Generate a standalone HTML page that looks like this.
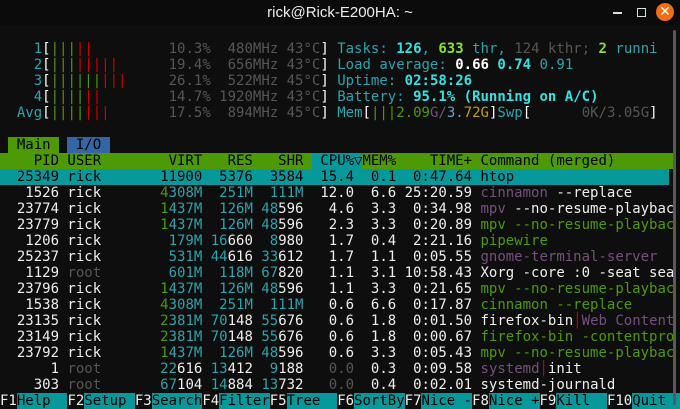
<!DOCTYPE html>
<html><head><meta charset="utf-8"><style>
body{margin:0;width:680px;height:409px;background:#0e0e0e;overflow:hidden;position:relative}
#tb{position:absolute;left:0;top:0;width:680px;height:25px;background:#0b0b0b;color:#eee;font:15px "Liberation Sans","DejaVu Sans",sans-serif;text-align:center;line-height:25px}
#term{position:absolute;left:0;top:25px;font:14px "DejaVu Sans Mono",monospace;line-height:16px;color:#eeeeec}
.l{height:16px;white-space:pre}
.c{color:#2aa5ad}.C{color:#34e2e2;font-weight:bold}.g{color:#4e9a06}.G{color:#8ae234;font-weight:bold}
.r{color:#cc0000}.k{color:#555753}.w{color:#fff}.W{color:#fff;font-weight:bold}.m{color:#75507b}.b{color:#729fcf}.y{color:#c4a000}
.hg{background:#4e9a06;color:#000}.hc{background:#06989a;color:#000}.hb{background:#3465a4;color:#000}
.sel{background:#06989a;color:#000;width:669px}
#sb{position:absolute;left:673px;top:30px;width:3px;height:375px;background:#5a5a5a;border-radius:2px}
</style></head><body>
<div id="tb">rick@Rick-E200HA: ~</div>
<div style="position:absolute;left:613px;top:12px;width:9px;height:2px;background:#ddd"></div>
<div style="position:absolute;left:637px;top:8px;width:7px;height:7px;border:1.5px solid #ddd"></div>
<div style="position:absolute;left:656px;top:3px;width:18px;height:18px;border-radius:50%;background:#f46b12;color:#fff;font:bold 14px 'DejaVu Sans',sans-serif;text-align:center;line-height:18px">✕</div>
<div id="term"><div class="l"> </div><div class="l">    <span class="c">1</span><span class="w">[</span><span class="g">|||</span><span class="r">||</span>         <span class="k">10.3%  480MHz 43°C</span><span class="w">]</span> <span class="c">Tasks: </span><span class="C">126</span><span class="c">, </span><span class="G">633</span><span class="c"> thr, </span><span class="k">124 kthr; </span><span class="G">2</span><span class="c"> runni</span></div><div class="l">    <span class="c">2</span><span class="w">[</span><span class="g">|||</span><span class="r">|||||</span>      <span class="k">19.4%  656MHz 43°C</span><span class="w">]</span> <span class="c">Load average: </span><span class="W">0.66 </span><span class="C">0.74 </span><span class="c">0.91</span></div><div class="l">    <span class="c">3</span><span class="w">[</span><span class="g">||||||</span><span class="r">|||</span>     <span class="k">26.1%  522MHz 45°C</span><span class="w">]</span> <span class="c">Uptime: </span><span class="C">02:58:26</span></div><div class="l">    <span class="c">4</span><span class="w">[</span><span class="g">||||</span><span class="r">||</span>        <span class="k">14.7% 1920MHz 43°C</span><span class="w">]</span> <span class="c">Battery: </span><span class="C">95.1% (Running on A/C)</span></div><div class="l">  <span class="c">Avg</span><span class="w">[</span><span class="g">||||</span><span class="r">|||</span>       <span class="k">17.5%  894MHz 45°C</span><span class="w">]</span> <span class="c">Mem</span><span class="w">[</span><span class="g">|||2.09</span><span class="m">G/</span><span class="b">3.</span><span class="y">72G</span><span class="w">]</span><span class="c">Swp</span><span class="w">[</span>      <span class="k">0K/3.05G</span><span class="w">]</span></div><div class="l"> </div><div class="l"> <span class="hg"> Main </span> <span class="hb"> I/O </span></div><div class="l"><span class="hg">    PID USER        VIRT   RES   SHR </span><span class="hc"> CPU%▽</span><span class="hg">MEM%    TIME+ Command (merged)       </span></div><div class="l sel">  25349 rick       11900  5376  3584  15.4  0.1  0:47.64 htop</div><div class="l">   1526 rick       <span class="g">4</span><span class="c">308M  251M  111M</span>  12.0  6.6 25:20.59 <span class="m">cinnamon</span> --replace</div><div class="l">  23774 rick       <span class="g">1</span><span class="c">437M  126M 48</span>596   4.6  3.3  0:34.98 <span class="m">mpv</span> --no-resume-playbac</div><div class="l">  23779 rick       <span class="g">1</span><span class="c">437M  126M 48</span>596   2.3  3.3  0:20.89 <span class="g">mpv --no-resume-playbac</span></div><div class="l">   1206 rick        <span class="c">179M 16</span>660  <span class="c">8</span>980   1.7  0.4  2:21.16 <span class="g">pipewire</span></div><div class="l">  25237 rick        <span class="c">531M 44</span>616 <span class="c">33</span>612   1.7  1.1  0:05.55 <span class="m">gnome-terminal-server</span></div><div class="l">   1129 <span class="k">root</span>        <span class="c">601M  118M 67</span>820   1.1  3.1 10:58.43 Xorg -core :0 -seat sea</div><div class="l">  23796 rick       <span class="g">1</span><span class="c">437M  126M 48</span>596   1.1  3.3  0:21.65 <span class="g">mpv --no-resume-playbac</span></div><div class="l">   1538 rick       <span class="g">4</span><span class="c">308M  251M  111M</span>   0.6  6.6  0:17.87 <span class="g">cinnamon --replace</span></div><div class="l">  23135 rick       <span class="g">2</span><span class="c">381M 70</span>148 <span class="c">55</span>676   0.6  1.8  0:01.50 firefox-bin<span class="r">│</span><span class="m">Web Content</span></div><div class="l">  23149 rick       <span class="g">2</span><span class="c">381M 70</span>148 <span class="c">55</span>676   0.6  1.8  0:00.67 <span class="g">firefox-bin -contentpro</span></div><div class="l">  23792 rick       <span class="g">1</span><span class="c">437M  126M 48</span>596   0.6  3.3  0:05.43 <span class="g">mpv --no-resume-playbac</span></div><div class="l">      1 <span class="k">root</span>       <span class="c">22</span>616 <span class="c">13</span>412  <span class="c">9</span>188   <span class="k">0.0</span>  0.3  0:09.58 <span class="m">systemd</span><span class="r">│</span>init</div><div class="l">    303 <span class="k">root</span>       <span class="c">67</span>104 <span class="c">14</span>884 <span class="c">13</span>732   <span class="k">0.0</span>  0.4  0:02.01 systemd-journald</div><div class="l">F1<span class="hc">Help  </span>F2<span class="hc">Setup </span>F3<span class="hc">Search</span>F4<span class="hc">Filter</span>F5<span class="hc">Tree  </span>F6<span class="hc">SortBy</span>F7<span class="hc">Nice -</span>F8<span class="hc">Nice +</span>F9<span class="hc">Kill  </span>F10<span class="hc">Quit  </span></div></div>
<div id="sb"></div>
</body></html>
